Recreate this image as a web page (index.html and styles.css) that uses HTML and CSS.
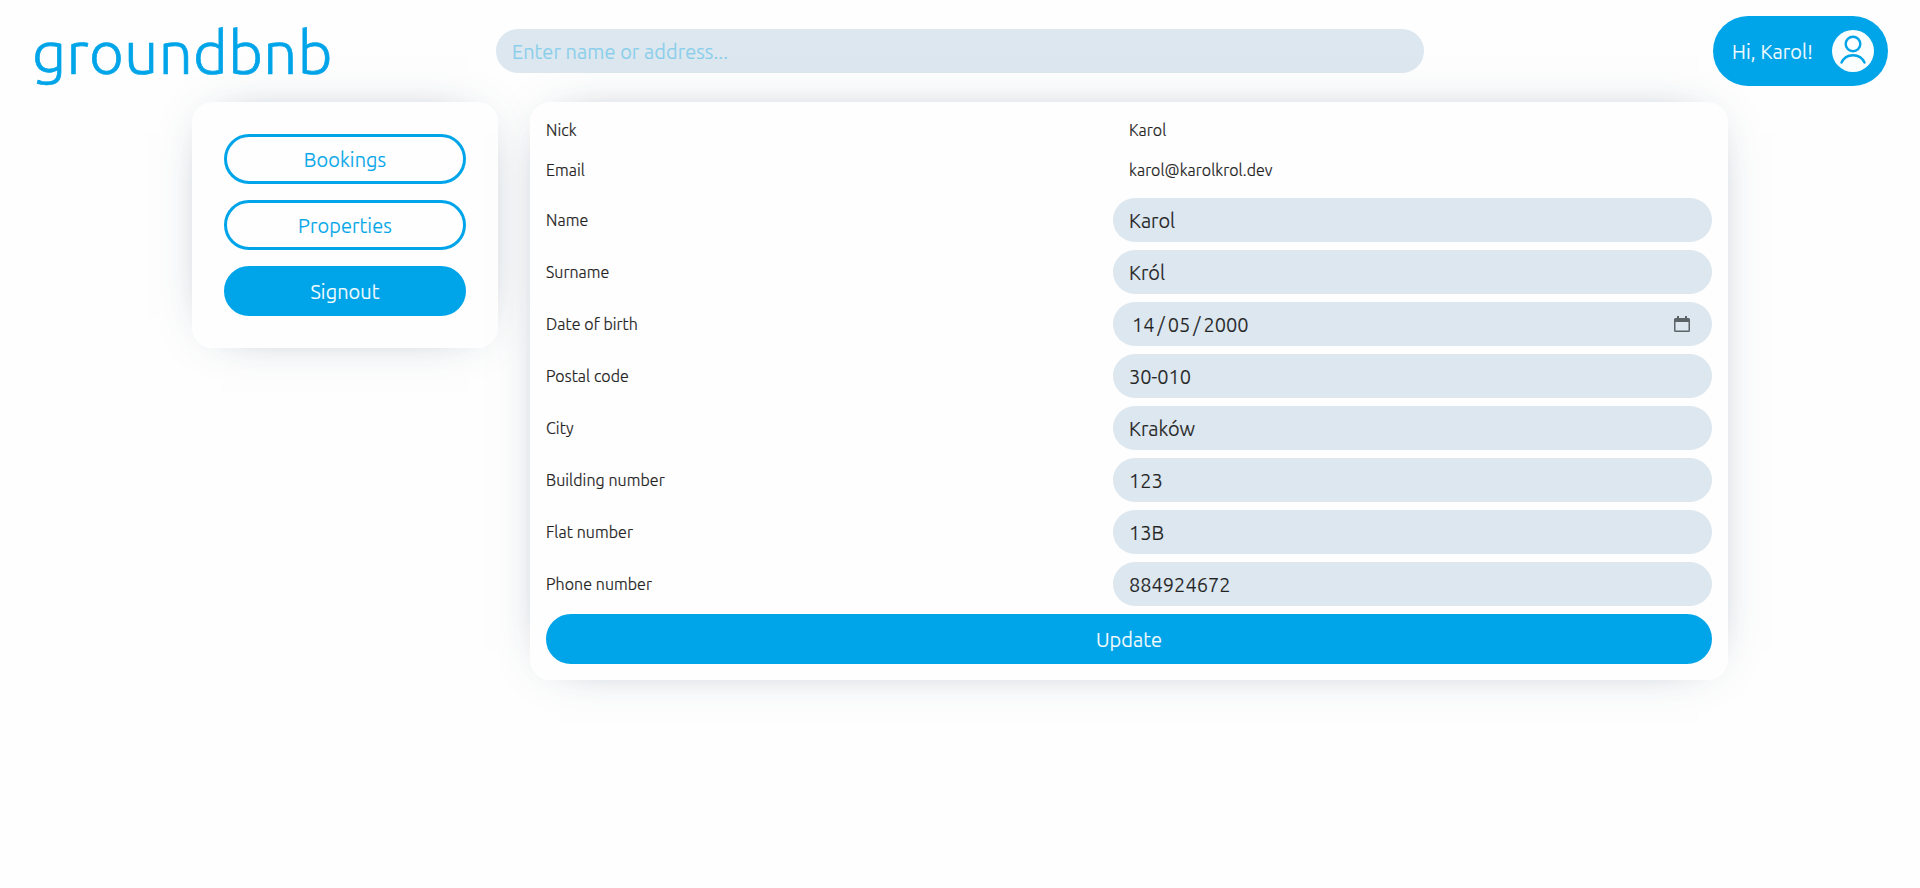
FILE: index.html
```html
<!DOCTYPE html>
<html lang="en">
<head>
<meta charset="utf-8">
<title>groundbnb</title>
<link rel="stylesheet" href="styles.css">
</head>
<body>
<header class="header">
  <a class="logo">groundbnb</a>
  <input class="field search" type="text" placeholder="Enter name or address...">
  <div class="account-area">
    <a class="account">
      <span class="greeting">Hi, Karol!</span>
      <svg class="avatar" viewBox="0 0 42 42" width="42" height="42">
        <circle cx="21" cy="21" r="21" fill="#fbfeff"/>
        <g fill="none" stroke="#00a5e9" stroke-width="2.4">
          <circle cx="21" cy="14" r="7.3"/>
          <path stroke-linecap="round" d="M9.500 32.600C11.400 28.300 15.800 25.200 21 25.200S30.600 28.300 32.500 32.600"/>
        </g>
      </svg>
    </a>
  </div>
</header>
<main class="layout">
  <nav class="card menu">
    <a class="button outline bookings">Bookings</a>
    <a class="button outline properties">Properties</a>
    <a class="button signout">Signout</a>
  </nav>
  <form class="card profile">
    <div class="row plain"><span class="label">Nick</span><span class="value">Karol</span></div>
    <div class="row plain"><span class="label">Email</span><span class="value">karol@karolkrol.dev</span></div>
    <div class="row"><label class="label">Name</label><input class="field" type="text" value="Karol"></div>
    <div class="row"><label class="label">Surname</label><input class="field" type="text" value="Król"></div>
    <div class="row"><label class="label">Date of birth</label>
      <div class="field date">
        <span class="date-text"><span>14</span><span class="slash">/</span><span>05</span><span class="slash">/</span><span>2000</span></span>
        <svg class="calendar" viewBox="0 0 16 16" width="16" height="16">
          <path fill="#5c6468" fill-rule="evenodd" d="M3 0h2v2h6V0h2v2h1.5A1.5 1.5 0 0 1 16 3.500V14.500A1.500 1.500 0 0 1 14.500 16H1.500A1.500 1.500 0 0 1 0 14.500V3.500A1.500 1.500 0 0 1 1.500 2H3ZM1.500 6V14.500H14.500V6Z"/>
        </svg>
      </div>
    </div>
    <div class="row"><label class="label">Postal code</label><input class="field" type="text" value="30-010"></div>
    <div class="row"><label class="label">City</label><input class="field" type="text" value="Kraków"></div>
    <div class="row"><label class="label">Building number</label><input class="field" type="text" value="123"></div>
    <div class="row"><label class="label">Flat number</label><input class="field" type="text" value="13B"></div>
    <div class="row"><label class="label">Phone number</label><input class="field" type="text" value="884924672"></div>
    <button class="button update" type="button">Update</button>
  </form>
</main>
</body>
</html>
```
FILE: styles.css
```css
* { box-sizing: border-box; }

body {
  margin: 0;
  min-height: 100vh;
  background: #fefefe;
  color: #222;
  font-family: Ubuntu, "Open Sans", "Noto Sans", sans-serif;
  font-weight: 300;
  font-size: 16px;
  line-height: 24px;
  -webkit-text-stroke: 0.2px currentColor;
}

.header {
  display: grid;
  grid-template-columns: 464px 928px 1fr;
  align-items: center;
  height: 102px;
  padding: 0 32px;
}

.logo {
  padding-top: 2px;
  color: #00a5e9;
  font-size: 60px;
  line-height: 70px;
  letter-spacing: 0.4px;
  -webkit-text-stroke-width: 0.7px;
}

.field {
  display: block;
  width: 100%;
  height: 44px;
  margin: 0;
  padding: 0 16px;
  border: 0;
  border-radius: 22px;
  background: #dce7ef;
  color: #222;
  font: inherit;
  font-size: 20px;
}

.search { letter-spacing: 0.1px; }
.search::placeholder { color: #87ceeb; opacity: 1; }

.account-area { display: flex; justify-content: flex-end; }

.account {
  display: flex;
  align-items: center;
  justify-content: space-between;
  width: 175px;
  height: 70px;
  padding: 0 14px 0 19px;
  border-radius: 35px;
  background: #00a5e9;
  color: #fbfeff;
  font-size: 20px;
  letter-spacing: 0.15px;
  white-space: nowrap;
}

.greeting { padding-top: 2px; }

.layout {
  display: grid;
  grid-template-columns: 306px 1198px;
  gap: 32px;
  align-items: start;
  padding-left: 192px;
}

.card {
  border-radius: 20px;
  background: #fefefe;
  box-shadow: 0 0 50px -30px rgba(60, 85, 110, 0.9);
}

.menu {
  display: flex;
  flex-direction: column;
  gap: 16px;
  padding: 32px;
}

.button {
  display: block;
  width: 100%;
  height: 50px;
  padding: 2px 0 0;
  border: 3px solid #00a5e9;
  border-radius: 25px;
  background: #00a5e9;
  color: #fbfeff;
  font: inherit;
  font-size: 20px;
  letter-spacing: 0.12px;
  line-height: 42px;
  text-align: center;
}

.outline { background: #fefefe; color: #00a5e9; }

.profile { padding: 16px; }

.row {
  display: grid;
  grid-template-columns: 567px 1fr;
  align-items: center;
  margin-bottom: 8px;
}

.plain { margin-bottom: 16px; }

.label, .value { letter-spacing: 0.08px; }

.value { padding-left: 16px; }

.date {
  display: flex;
  align-items: center;
  justify-content: space-between;
  padding: 0 22px 0 19px;
}

.date-text { display: flex; padding-top: 2px; }
.slash { padding: 0 3px; }
```
